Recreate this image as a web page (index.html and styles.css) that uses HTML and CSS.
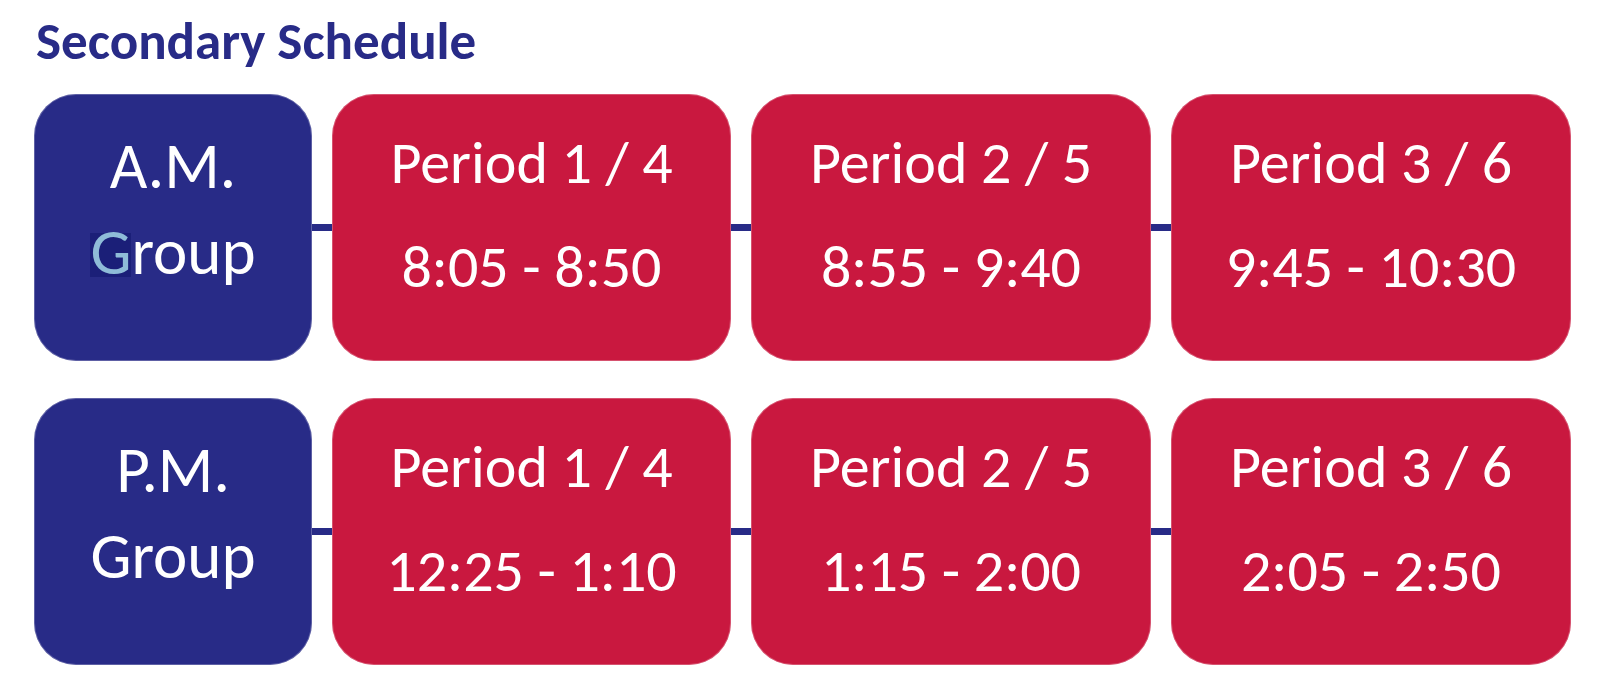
FILE: index.html
```html
<!DOCTYPE html>
<html lang="en">
<head>
<meta charset="utf-8">
<title>Secondary Schedule</title>
<link rel="stylesheet" href="styles.css">
</head>
<body>
<div class="page">
  <h1 class="title">Secondary Schedule</h1>
  <div class="schedule">
    <div class="row">
      <div class="cell group"><div class="line">A.M.</div><div class="line"><span class="sel">G</span>roup</div></div>
      <div class="cell period"><div class="line">Period 1 / 4</div><div class="line">8:05 - 8:50</div></div>
      <div class="cell period"><div class="line">Period 2 / 5</div><div class="line">8:55 - 9:40</div></div>
      <div class="cell period"><div class="line">Period 3 / 6</div><div class="line">9:45 - 10:30</div></div>
    </div>
    <div class="row">
      <div class="cell group"><div class="line">P.M.</div><div class="line">Group</div></div>
      <div class="cell period"><div class="line">Period 1 / 4</div><div class="line">12:25 - 1:10</div></div>
      <div class="cell period"><div class="line">Period 2 / 5</div><div class="line">1:15 - 2:00</div></div>
      <div class="cell period"><div class="line">Period 3 / 6</div><div class="line">2:05 - 2:50</div></div>
    </div>
  </div>
</div>
</body>
</html>
```
FILE: styles.css
```css
html, body {
  margin: 0;
  padding: 0;
  background: #ffffff;
}

.page {
  width: 1603px;
  height: 690px;
  padding: 0 0 0 34px;
  box-sizing: border-box;
  font-family: Carlito, "Open Sans", sans-serif;
}

.title {
  margin: 0;
  padding: 11px 0 0 2px;
  height: 94px;
  box-sizing: border-box;
  font-size: 53px;
  line-height: 60px;
  font-weight: 700;
  color: #282b87;
}

.schedule {
  display: flex;
  flex-direction: column;
  gap: 37px;
}

.row {
  display: grid;
  grid-template-columns: 278px 399px 400px 400px;
  column-gap: 20px;
  height: 267px;
  width: 1537px;
  background: linear-gradient(#282b87, #282b87) no-repeat center / 100% 7px;
}

.cell {
  border-radius: 42px;
  color: #ffffff;
  text-align: center;
  display: flex;
  flex-direction: column;
  box-shadow: inset 0 0 0 1px rgba(255, 255, 255, 0.25);
}

.group {
  background: #282b87;
  font-size: 65px;
  padding-top: 29px;
}

.group .line {
  line-height: 86px;
}

.period {
  background: #c9183f;
  font-size: 60px;
  padding-top: 17px;
}

.period .line {
  line-height: 104px;
}

.sel {
  color: #8fbcd8;
  background: linear-gradient(#1b1f78, #1b1f78) no-repeat 0 21px / 100% 44px;
}
```
